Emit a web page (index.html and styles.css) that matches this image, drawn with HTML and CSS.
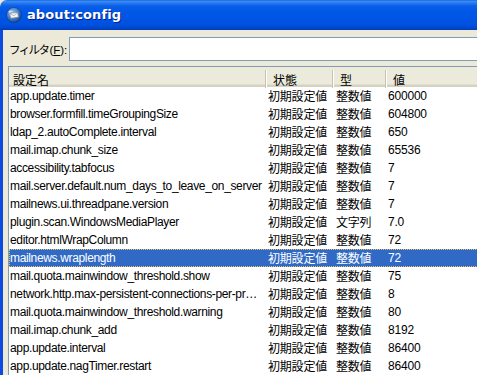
FILE: index.html
```html
<!DOCTYPE html>
<html lang="ja">
<head>
<meta charset="utf-8">
<link rel="stylesheet" href="styles.css">
</head>
<body>
<div class="window">
  <div class="titlebar">
    <svg class="appicon" width="16" height="16" viewBox="0 0 16 16">
      <defs>
        <radialGradient id="g" cx="0.4" cy="0.35" r="0.7">
          <stop offset="0" stop-color="#9cc6f5"/>
          <stop offset="0.6" stop-color="#3a78c8"/>
          <stop offset="1" stop-color="#1b3f86"/>
        </radialGradient>
      </defs>
      <circle cx="8" cy="8" r="7.5" fill="url(#g)" stroke="#17357a" stroke-width="0.6"/>
      <path d="M3.5 6.5 L11.5 5.5 L12.5 10 L5 11.2 Z" fill="#f4f4f4" stroke="#8a8a8a" stroke-width="0.5"/>
      <path d="M3.5 6.5 L8 8.8 L11.5 5.5" fill="none" stroke="#9a9a9a" stroke-width="0.6"/>
      <path d="M2.5 4.5 C4 3 6 3 7 4.5 C5.5 4.3 4 5 3.5 6.5 Z" fill="#dfe6ef"/>
    </svg>
    <span class="title">about:config</span>
  </div>
  <div class="content">
    <div class="filter">
      <label class="flabel"><span class="kana">フィルタ</span>(<u>F</u>):</label>
      <div class="input"></div>
    </div>
    <div class="list">
      <div class="header">
        <div class="hcell first">設定名</div>
        <div class="hcell">状態</div>
        <div class="hcell">型</div>
        <div class="hcell">値</div>
      </div>
      <div class="rows">
        <div class="row"><span>app.update.timer</span><span>初期設定値</span><span>整数値</span><span>600000</span></div>
        <div class="row"><span>browser.formfill.timeGroupingSize</span><span>初期設定値</span><span>整数値</span><span>604800</span></div>
        <div class="row"><span>ldap_2.autoComplete.interval</span><span>初期設定値</span><span>整数値</span><span>650</span></div>
        <div class="row"><span>mail.imap.chunk_size</span><span>初期設定値</span><span>整数値</span><span>65536</span></div>
        <div class="row"><span>accessibility.tabfocus</span><span>初期設定値</span><span>整数値</span><span>7</span></div>
        <div class="row"><span>mail.server.default.num_days_to_leave_on_server</span><span>初期設定値</span><span>整数値</span><span>7</span></div>
        <div class="row"><span>mailnews.ui.threadpane.version</span><span>初期設定値</span><span>整数値</span><span>7</span></div>
        <div class="row"><span>plugin.scan.WindowsMediaPlayer</span><span>初期設定値</span><span>文字列</span><span>7.0</span></div>
        <div class="row"><span>editor.htmlWrapColumn</span><span>初期設定値</span><span>整数値</span><span>72</span></div>
        <div class="row selected"><span>mailnews.wraplength</span><span>初期設定値</span><span>整数値</span><span>72</span></div>
        <div class="row"><span>mail.quota.mainwindow_threshold.show</span><span>初期設定値</span><span>整数値</span><span>75</span></div>
        <div class="row"><span>network.http.max-persistent-connections-per-proxy</span><span>初期設定値</span><span>整数値</span><span>8</span></div>
        <div class="row"><span>mail.quota.mainwindow_threshold.warning</span><span>初期設定値</span><span>整数値</span><span>80</span></div>
        <div class="row"><span>mail.imap.chunk_add</span><span>初期設定値</span><span>整数値</span><span>8192</span></div>
        <div class="row"><span>app.update.interval</span><span>初期設定値</span><span>整数値</span><span>86400</span></div>
        <div class="row"><span>app.update.nagTimer.restart</span><span>初期設定値</span><span>整数値</span><span>86400</span></div>
      </div>
    </div>
  </div>
</div>
</body>
</html>
```
FILE: styles.css
```css
html, body {
  margin: 0;
  padding: 0;
  width: 477px;
  height: 375px;
  overflow: hidden;
  background: #ece9d8;
}
.window {
  width: 520px;
  height: 375px;
  display: flex;
  flex-direction: column;
  font-family: "Liberation Sans", "Noto Sans CJK JP", sans-serif;
  font-size: 12px;
  color: #000;
}
.titlebar {
  height: 30px;
  flex: none;
  display: flex;
  align-items: center;
  gap: 5px;
  padding-left: 6px;
  border-top-left-radius: 7px;
  background: linear-gradient(to bottom,
    #0a5ad8 0px, #3d8ff5 1px, #2a7af0 3px, #0a5ee8 6px,
    #0058e6 12px, #0054e3 20px, #0050de 25px, #0048cf 28px, #003cb4 30px);
}
.appicon { flex: none; }
.title {
  color: #fff;
  font-family: "DejaVu Sans", sans-serif;
  font-weight: bold;
  font-size: 13px;
  letter-spacing: 0.1px;
  text-shadow: 1px 1px 0 #0a1e8c;
  padding-bottom: 1px;
}
.content {
  flex: 1;
  border-left: 3px solid #0b4be0;
  background: #ece9d8;
  padding: 7px 0 0 5px;
  display: flex;
  flex-direction: column;
}
.filter {
  display: flex;
  align-items: center;
  height: 24px;
}
.flabel {
  flex: none;
  padding-left: 1px;
  margin-right: 2px;
  font-family: "Liberation Sans", "Noto Sans CJK JP", sans-serif;
  font-size: 11.5px;
  white-space: nowrap;
}
.kana {
  letter-spacing: -1.6px;
  margin-right: 1px;
}
.input {
  flex: 1;
  height: 22px;
  background: #fff;
  border: 1px solid #7f9db9;
  border-right: none;
}
.list {
  margin-top: 5px;
  flex: 1;
  border: 1px solid #7f9db9;
  border-right: none;
  border-bottom: none;
  background: #fff;
}
.header {
  display: grid;
  grid-template-columns: 256px 67px 53px 1fr;
  height: 18px;
  background: #ebeadb;
  border-bottom: 2px solid #d6d2c2;
  box-shadow: inset 0 -1px 0 #e2ded1;
}
.hcell {
  display: flex;
  align-items: center;
  padding-left: 7px;
  padding-top: 1px;
  font-family: "Noto Sans CJK JP", sans-serif;
  border-left: 1px solid #c7c5b2;
  box-shadow: inset 1px 0 0 #fff;
  margin: 3px 0 2px;
}
.hcell.first {
  border-left: none;
  box-shadow: none;
  padding-left: 4px;
}
.row {
  display: grid;
  grid-template-columns: 256px 67px 53px 1fr;
  height: 18px;
  align-items: center;
}
.row span {
  white-space: nowrap;
  overflow: hidden;
  text-overflow: ellipsis;
  line-height: 18px;
}
.row span:nth-child(1) { padding-left: 1px; padding-right: 3px; letter-spacing: -0.35px; }
.row span:nth-child(2) { padding-left: 3px; font-family: "Noto Sans CJK JP", sans-serif; letter-spacing: -0.2px; }
.row span:nth-child(3) { padding-left: 4px; font-family: "Noto Sans CJK JP", sans-serif; letter-spacing: -0.2px; }
.row span:nth-child(4) { padding-left: 3px; letter-spacing: -0.2px; }
.row.selected {
  background: #316ac5;
  color: #fff;
  outline: 1px dotted #e0c060;
  outline-offset: -1px;
}
```
